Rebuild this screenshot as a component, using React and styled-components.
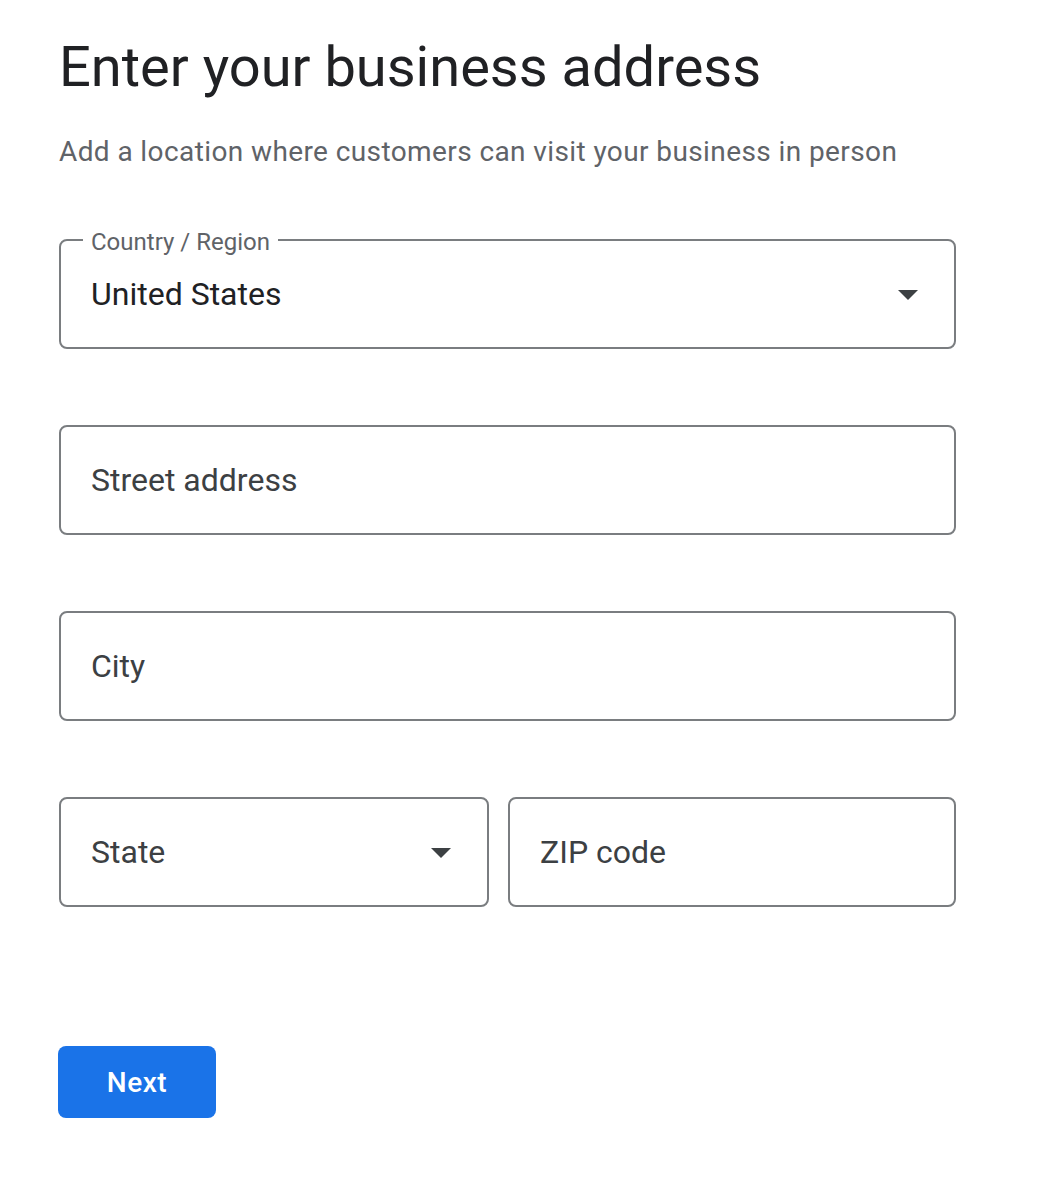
import React from "react";
import styled, { createGlobalStyle } from "styled-components";

const Global = createGlobalStyle`
  html, body { margin: 0; padding: 0; background: #ffffff; }
  body { font-family: Roboto, "Noto Sans", Arial, sans-serif; -webkit-font-smoothing: antialiased; }
  * { box-sizing: border-box; }
`;

const Page = styled.main`
  width: 1064px;
  min-height: 1184px;
  padding: 33px 0 0 59px;
`;

const Form = styled.form`
  width: 897px;
  display: flex;
  flex-direction: column;
`;

const Title = styled.h1`
  margin: 0;
  font-family: Roboto, Arial, sans-serif;
  font-weight: 400;
  font-size: 56px;
  line-height: 68px;
  color: #202124;
  letter-spacing: 0;
`;

const Subtitle = styled.p`
  margin: 31px 0 0;
  font-size: 28px;
  line-height: 40px;
  color: #5f6368;
  letter-spacing: 0.4px;
`;

const Fields = styled.div`
  margin-top: 67px;
  display: flex;
  flex-direction: column;
  gap: 76px;
`;

const Row = styled.div`
  display: grid;
  grid-template-columns: ${(p) => p.$cols || "1fr"};
  gap: 19px;
`;

const Box = styled.div`
  position: relative;
  height: 110px;
  border: 2px solid #7a7d80;
  border-radius: 8px;
  display: flex;
  align-items: center;
  padding: 0 22px 0 30px;
`;

const Label = styled.span`
  position: absolute;
  top: -14px;
  left: 22px;
  padding: 0 8px;
  background: #ffffff;
  font-size: 24px;
  line-height: 30px;
  color: #5f6368;
`;

const Value = styled.span`
  flex: 1;
  font-size: 32px;
  line-height: 40px;
  color: ${(p) => (p.$placeholder ? "#3c4043" : "#202124")};
`;

const Arrow = styled.svg`
  width: 48px;
  height: 48px;
  flex: none;
`;

const Button = styled.button`
  margin-top: 139px;
  margin-left: -1px;
  width: 158px;
  height: 72px;
  border: none;
  border-radius: 8px;
  background: #1a73e8;
  color: #ffffff;
  font-family: Roboto, Arial, sans-serif;
  font-weight: 500;
  font-size: 28px;
  letter-spacing: 0.5px;
  cursor: pointer;
`;

const DropArrow = () => (
  <Arrow viewBox="0 0 24 24" aria-hidden="true">
    <path d="M7 10l5 5 5-5z" fill="#3c4043" />
  </Arrow>
);

const Field = ({ label, value, placeholder, select }) => (
  <Box>
    {label && <Label>{label}</Label>}
    <Value $placeholder={!value}>{value || placeholder}</Value>
    {select && <DropArrow />}
  </Box>
);

export default function App() {
  return (
    <>
      <Global />
      <Page>
        <Form onSubmit={(e) => e.preventDefault()}>
          <Title>Enter your business address</Title>
          <Subtitle>Add a location where customers can visit your business in person</Subtitle>
          <Fields>
            <Field label="Country / Region" value="United States" select />
            <Field placeholder="Street address" />
            <Field placeholder="City" />
            <Row $cols="430px 1fr">
              <Field placeholder="State" select />
              <Field placeholder="ZIP code" />
            </Row>
          </Fields>
          <Button type="submit">Next</Button>
        </Form>
      </Page>
    </>
  );
}
